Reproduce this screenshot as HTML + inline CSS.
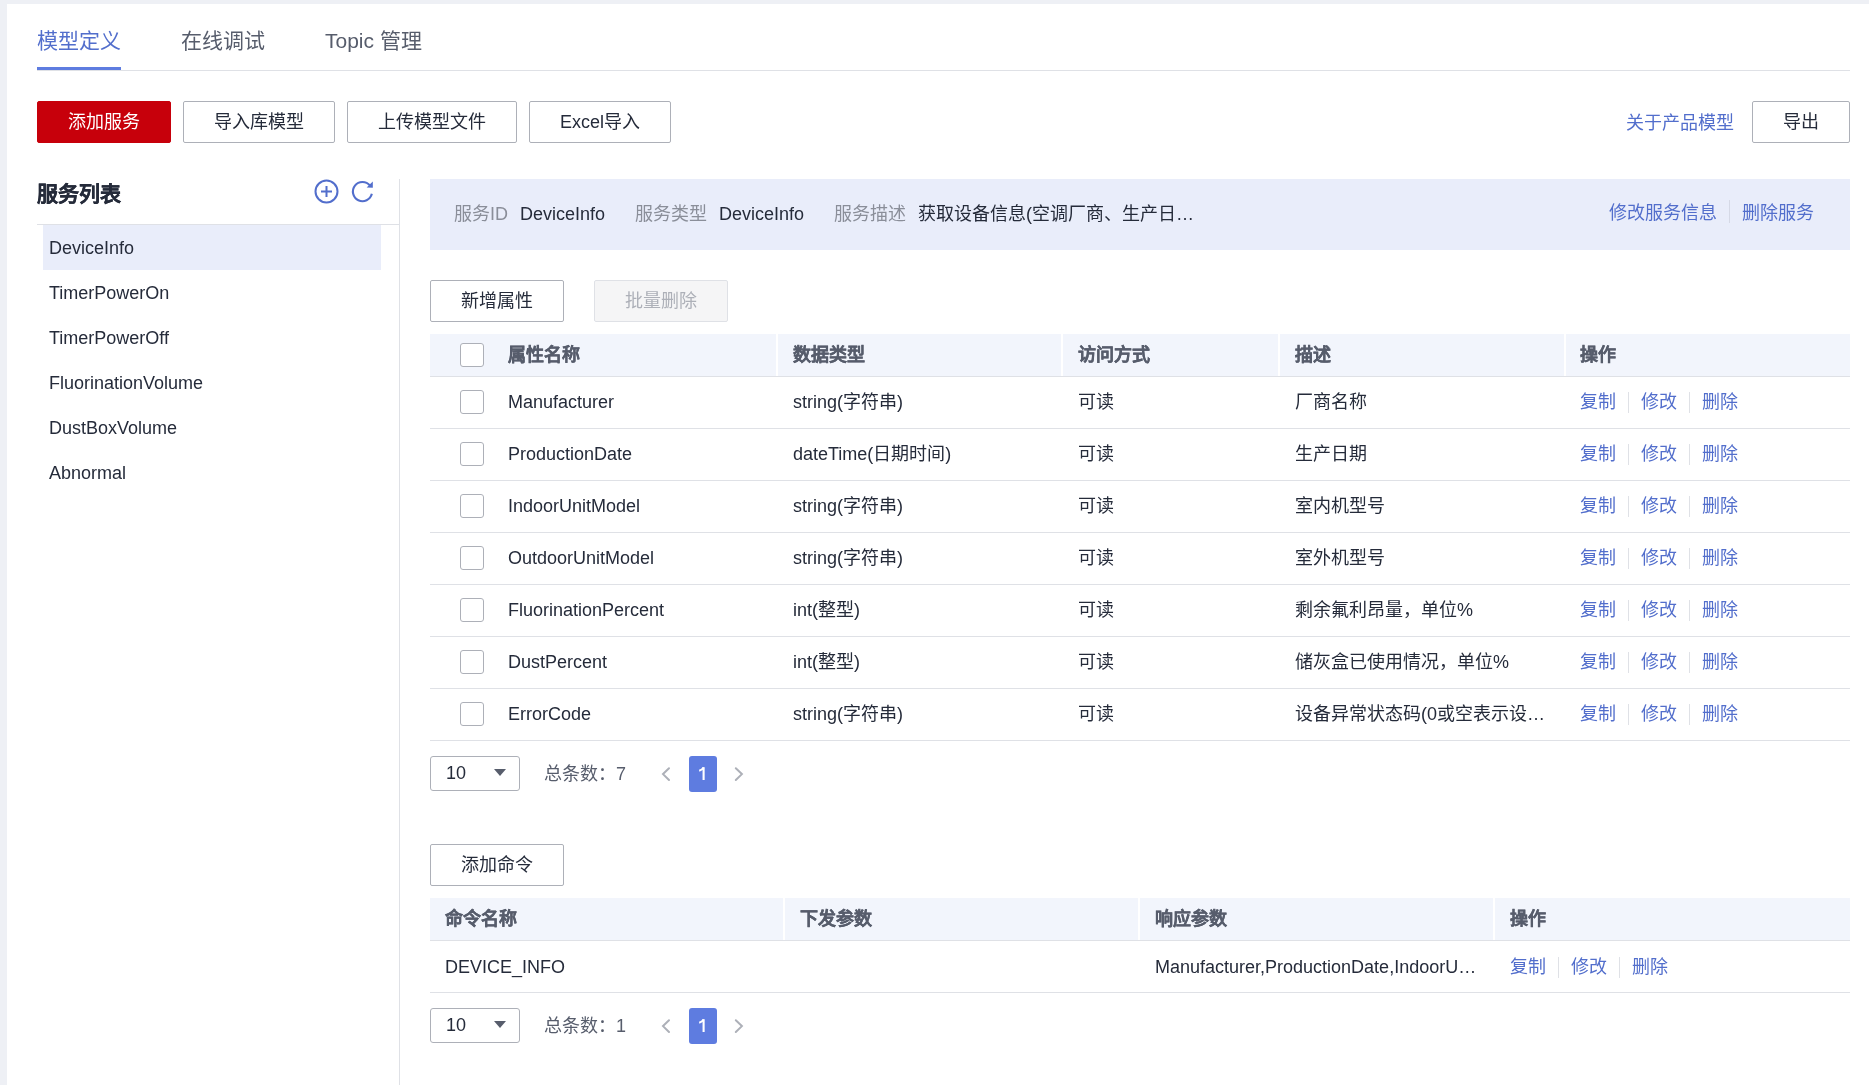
<!DOCTYPE html>
<html lang="zh-CN"><head><meta charset="utf-8">
<style>
*{box-sizing:border-box;margin:0;padding:0}
html,body{width:1869px;height:1085px;overflow:hidden}
body{background:#eef0f5;font-family:"Liberation Sans",sans-serif;color:#252b3a;font-size:18px;position:relative}
.panel{position:absolute;left:7px;top:4px;right:0;bottom:0;background:#fff}
body>*{will-change:transform}
.abs{position:absolute}
.tab{position:absolute;top:26px;height:30px;line-height:30px;font-size:21px;color:#575d6c;white-space:nowrap}
.tab.active{color:#526ecc}
.btn{position:absolute;height:42px;line-height:40px;border:1px solid #adb0b8;border-radius:2px;text-align:center;font-size:18px;color:#252b3a;background:#fff;white-space:nowrap}
.btn.red{background:#c7000b;border-color:#c7000b;color:#fff}
.btn.dis{background:#f5f5f6;border-color:#dfe1e6;color:#adb0b8}
.link{color:#526ecc}
.svc{position:absolute;left:43px;width:338px;height:45px;line-height:47px;padding-left:6px;font-size:18px;color:#252b3a;white-space:nowrap}
.svc.sel{background:#e9edfa}
.tbl{position:absolute;left:430px;width:1420px}
.thead{position:relative;height:43px;background:#f2f5fc;border-bottom:1px solid #dfe1e6}
.th{position:absolute;top:0;height:42px;line-height:42px;font-weight:bold;color:#575d6c;font-size:18px;white-space:nowrap;-webkit-text-stroke:0.25px #575d6c}
.sep{position:absolute;top:0;width:2px;height:42px;background:#fff}
.row{position:relative;height:52px;border-bottom:1px solid #dfe1e6}
.td{position:absolute;top:0;height:51px;line-height:51px;font-size:18px;color:#252b3a;white-space:nowrap}
.cb{position:absolute;left:30px;width:24px;height:24px;border:1px solid #adb0b8;border-radius:3px;background:#fff}
.ops{position:absolute;top:0;height:51px;line-height:51px;font-size:18px;color:#526ecc;white-space:nowrap}
.ops span.s{display:inline-block;width:1px;height:21px;background:#dfe1e6;vertical-align:middle;margin:0 12px;position:relative;top:-1px}
.pager{position:absolute;left:430px;width:600px;height:36px}
.sel10{position:absolute;left:0;top:0;width:90px;height:35px;border:1px solid #adb0b8;border-radius:3px;line-height:33px;padding-left:15px;font-size:18px;color:#252b3a}
.sel10 i{position:absolute;left:63px;top:12px;width:0;height:0;border-left:6px solid transparent;border-right:6px solid transparent;border-top:7px solid #575d6c}
.total{position:absolute;left:114px;top:1px;line-height:35px;font-size:18px;color:#575d6c;white-space:nowrap}
.pg{position:absolute;left:259px;top:0;width:28px;height:36px;border-radius:3px;background:#5e7ce0;color:#fff;text-align:center;line-height:36px;font-size:18px}
.arr{position:absolute;top:0;height:36px}
</style></head><body>
<div class="panel"></div>

<!-- tabs -->
<div class="tab active" style="left:37px">模型定义</div>
<div class="tab" style="left:181px">在线调试</div>
<div class="tab" style="left:325px">Topic 管理</div>
<div class="abs" style="left:37px;top:70px;width:1813px;height:1px;background:#dfe1e6"></div>
<div class="abs" style="left:37px;top:67px;width:84px;height:3px;background:#5e7ce0"></div>

<!-- toolbar -->
<div class="btn red" style="left:37px;top:101px;width:134px">添加服务</div>
<div class="btn" style="left:183px;top:101px;width:152px">导入库模型</div>
<div class="btn" style="left:347px;top:101px;width:170px">上传模型文件</div>
<div class="btn" style="left:529px;top:101px;width:142px">Excel导入</div>
<div class="abs link" style="left:1626px;top:102px;line-height:42px;font-size:18px;white-space:nowrap">关于产品模型</div>
<div class="btn" style="left:1752px;top:101px;width:98px">导出</div>

<!-- left service list -->
<div class="abs" style="left:37px;top:178px;line-height:32px;font-size:21px;font-weight:bold;color:#252b3a;white-space:nowrap;-webkit-text-stroke:0.25px #252b3a">服务列表</div>
<svg class="abs" style="left:312px;top:177px" width="30" height="30" viewBox="0 0 30 30">
  <circle cx="14.5" cy="14.5" r="11" fill="none" stroke="#526ecc" stroke-width="2"/>
  <path d="M9 14.5H20M14.5 9V20" stroke="#526ecc" stroke-width="2"/>
</svg>
<svg class="abs" style="left:348px;top:177px" width="30" height="30" viewBox="0 0 30 30">
  <path d="M23.85 16.8A9.6 9.6 0 1 1 21.9 8.4" fill="none" stroke="#526ecc" stroke-width="2.1" stroke-linecap="butt"/>
  <path d="M24.8 4.4V10.8L18.6 10.5Z" fill="#526ecc"/>
</svg>
<div class="abs" style="left:37px;top:224px;width:362px;height:1px;background:#dfe1e6"></div>
<div class="abs" style="left:399px;top:179px;width:1px;height:906px;background:#dfe1e6"></div>
<div class="svc sel" style="top:225px">DeviceInfo</div>
<div class="svc" style="top:270px">TimerPowerOn</div>
<div class="svc" style="top:315px">TimerPowerOff</div>
<div class="svc" style="top:360px">FluorinationVolume</div>
<div class="svc" style="top:405px">DustBoxVolume</div>
<div class="svc" style="top:450px">Abnormal</div>

<!-- info bar -->
<div class="abs" style="left:430px;top:179px;width:1420px;height:71px;background:#e9edfa;font-size:18px;line-height:71px;white-space:nowrap">
  <span class="abs" style="left:24px;color:#8a8e99">服务ID</span>
  <span class="abs" style="left:90px">DeviceInfo</span>
  <span class="abs" style="left:205px;color:#8a8e99">服务类型</span>
  <span class="abs" style="left:289px">DeviceInfo</span>
  <span class="abs" style="left:404px;color:#8a8e99">服务描述</span>
  <span class="abs" style="left:488px">获取设备信息(空调厂商、生产日…</span>
  <span class="abs link" style="left:1179px;top:-1px">修改服务信息</span>
  <span class="abs" style="left:1299px;top:21px;width:1px;height:23px;background:#d5d9e6"></span>
  <span class="abs link" style="left:1312px;top:-1px">删除服务</span>
</div>

<!-- property buttons -->
<div class="btn" style="left:430px;top:280px;width:134px">新增属性</div>
<div class="btn dis" style="left:594px;top:280px;width:134px">批量删除</div>

<!-- property table -->
<div class="tbl" style="top:334px">
  <div class="thead">
    <div class="cb" style="top:9px"></div>
    <div class="th" style="left:78px">属性名称</div>
    <div class="sep" style="left:346px"></div>
    <div class="th" style="left:363px">数据类型</div>
    <div class="sep" style="left:631px"></div>
    <div class="th" style="left:648px">访问方式</div>
    <div class="sep" style="left:848px"></div>
    <div class="th" style="left:865px">描述</div>
    <div class="sep" style="left:1134px"></div>
    <div class="th" style="left:1150px">操作</div>
  </div>
  <div class="row">
    <div class="cb" style="top:13px"></div>
    <div class="td" style="left:78px">Manufacturer</div>
    <div class="td" style="left:363px">string(字符串)</div>
    <div class="td" style="left:648px">可读</div>
    <div class="td" style="left:865px">厂商名称</div>
    <div class="ops" style="left:1150px">复制<span class="s"></span>修改<span class="s"></span>删除</div>
  </div>
  <div class="row">
    <div class="cb" style="top:13px"></div>
    <div class="td" style="left:78px">ProductionDate</div>
    <div class="td" style="left:363px">dateTime(日期时间)</div>
    <div class="td" style="left:648px">可读</div>
    <div class="td" style="left:865px">生产日期</div>
    <div class="ops" style="left:1150px">复制<span class="s"></span>修改<span class="s"></span>删除</div>
  </div>
  <div class="row">
    <div class="cb" style="top:13px"></div>
    <div class="td" style="left:78px">IndoorUnitModel</div>
    <div class="td" style="left:363px">string(字符串)</div>
    <div class="td" style="left:648px">可读</div>
    <div class="td" style="left:865px">室内机型号</div>
    <div class="ops" style="left:1150px">复制<span class="s"></span>修改<span class="s"></span>删除</div>
  </div>
  <div class="row">
    <div class="cb" style="top:13px"></div>
    <div class="td" style="left:78px">OutdoorUnitModel</div>
    <div class="td" style="left:363px">string(字符串)</div>
    <div class="td" style="left:648px">可读</div>
    <div class="td" style="left:865px">室外机型号</div>
    <div class="ops" style="left:1150px">复制<span class="s"></span>修改<span class="s"></span>删除</div>
  </div>
  <div class="row">
    <div class="cb" style="top:13px"></div>
    <div class="td" style="left:78px">FluorinationPercent</div>
    <div class="td" style="left:363px">int(整型)</div>
    <div class="td" style="left:648px">可读</div>
    <div class="td" style="left:865px">剩余氟利昂量，单位%</div>
    <div class="ops" style="left:1150px">复制<span class="s"></span>修改<span class="s"></span>删除</div>
  </div>
  <div class="row">
    <div class="cb" style="top:13px"></div>
    <div class="td" style="left:78px">DustPercent</div>
    <div class="td" style="left:363px">int(整型)</div>
    <div class="td" style="left:648px">可读</div>
    <div class="td" style="left:865px">储灰盒已使用情况，单位%</div>
    <div class="ops" style="left:1150px">复制<span class="s"></span>修改<span class="s"></span>删除</div>
  </div>
  <div class="row">
    <div class="cb" style="top:13px"></div>
    <div class="td" style="left:78px">ErrorCode</div>
    <div class="td" style="left:363px">string(字符串)</div>
    <div class="td" style="left:648px">可读</div>
    <div class="td" style="left:865px">设备异常状态码(0或空表示设…</div>
    <div class="ops" style="left:1150px">复制<span class="s"></span>修改<span class="s"></span>删除</div>
  </div>
</div>

<!-- pager 1 -->
<div class="pager" style="top:756px">
  <div class="sel10">10<i></i></div>
  <div class="total">总条数：7</div>
  <svg class="arr" style="left:228px" width="14" height="36" viewBox="0 0 14 36"><path d="M11 12.2L5 18.1L11 24" fill="none" stroke="#adb0b8" stroke-width="2" stroke-linecap="round" stroke-linejoin="miter"/></svg>
  <div class="pg"><svg width="28" height="36" viewBox="0 0 28 36" style="position:absolute;left:0;top:0"><path d="M14.6 11.2V24" stroke="#fff" stroke-width="2.1" fill="none"/><path d="M14.6 11.6C13.6 13.4 12.2 14.3 10.2 14.8" stroke="#fff" stroke-width="2" fill="none"/></svg></div>
  <svg class="arr" style="left:302px" width="14" height="36" viewBox="0 0 14 36"><path d="M3.8 12.2L9.9 18.1L3.8 24" fill="none" stroke="#adb0b8" stroke-width="2" stroke-linecap="round" stroke-linejoin="miter"/></svg>
</div>

<!-- command -->
<div class="btn" style="left:430px;top:844px;width:134px">添加命令</div>
<div class="tbl" style="top:898px">
  <div class="thead">
    <div class="th" style="left:15px">命令名称</div>
    <div class="sep" style="left:353px"></div>
    <div class="th" style="left:370px">下发参数</div>
    <div class="sep" style="left:708px"></div>
    <div class="th" style="left:725px">响应参数</div>
    <div class="sep" style="left:1063px"></div>
    <div class="th" style="left:1080px">操作</div>
  </div>
  <div class="row">
    <div class="td" style="left:15px;top:1px">DEVICE_INFO</div>
    <div class="td" style="left:725px;top:1px">Manufacturer,ProductionDate,IndoorU…</div>
    <div class="ops" style="left:1080px;top:1px">复制<span class="s"></span>修改<span class="s"></span>删除</div>
  </div>
</div>

<!-- pager 2 -->
<div class="pager" style="top:1008px">
  <div class="sel10">10<i></i></div>
  <div class="total">总条数：1</div>
  <svg class="arr" style="left:228px" width="14" height="36" viewBox="0 0 14 36"><path d="M11 12.2L5 18.1L11 24" fill="none" stroke="#adb0b8" stroke-width="2" stroke-linecap="round" stroke-linejoin="miter"/></svg>
  <div class="pg"><svg width="28" height="36" viewBox="0 0 28 36" style="position:absolute;left:0;top:0"><path d="M14.6 11.2V24" stroke="#fff" stroke-width="2.1" fill="none"/><path d="M14.6 11.6C13.6 13.4 12.2 14.3 10.2 14.8" stroke="#fff" stroke-width="2" fill="none"/></svg></div>
  <svg class="arr" style="left:302px" width="14" height="36" viewBox="0 0 14 36"><path d="M3.8 12.2L9.9 18.1L3.8 24" fill="none" stroke="#adb0b8" stroke-width="2" stroke-linecap="round" stroke-linejoin="miter"/></svg>
</div>
</body></html>
